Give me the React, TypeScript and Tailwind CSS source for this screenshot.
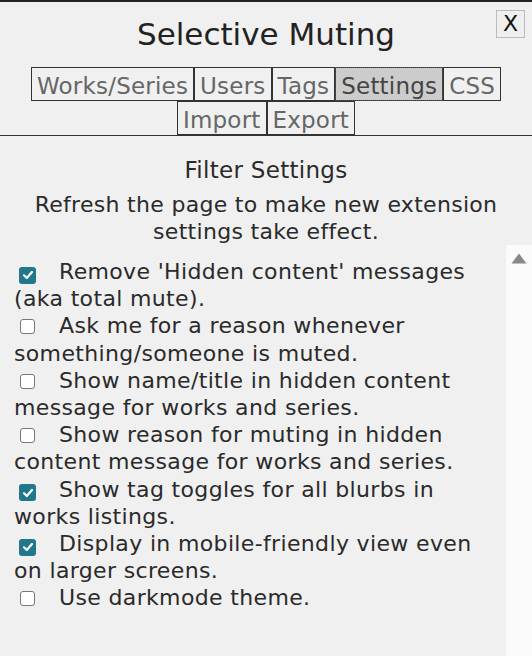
const tabsTop = ["Works/Series", "Users", "Tags", "Settings", "CSS"];
const tabsBottom = ["Import", "Export"];

const options = [
  { label: "Remove 'Hidden content' messages (aka total mute).", checked: true },
  { label: "Ask me for a reason whenever something/someone is muted.", checked: false },
  { label: "Show name/title in hidden content message for works and series.", checked: false },
  { label: "Show reason for muting in hidden content message for works and series.", checked: false },
  { label: "Show tag toggles for all blurbs in works listings.", checked: true },
  { label: "Display in mobile-friendly view even on larger screens.", checked: true },
  { label: "Use darkmode theme.", checked: false },
];

const Tab = ({ label, active }: { label: string; active?: boolean }) => (
  <button
    className={
      active
        ? "h-[34px] px-[5px] pt-[4px] leading-[28px] text-[23px] tracking-[0.2px] text-[#444] bg-[#cccccc] border border-[#333] outline-1 outline-dotted outline-[#555] -outline-offset-1"
        : "h-[34px] px-[5px] pt-[4px] leading-[28px] text-[23px] tracking-[0.2px] text-[#666] bg-[#f0f0f0] border border-[#333]"
    }
  >
    {label}
  </button>
);

const Check = ({ checked }: { checked: boolean }) =>
  checked ? (
    <span className="inline-flex items-center justify-center w-[17px] h-[17px] ml-[5px] mr-[23px] rounded-[3px] bg-[#21788a] align-[-2px]">
      <svg width="12" height="12" viewBox="0 0 12 12">
        <path d="M2 6.3 L4.8 9 L10 3" fill="none" stroke="#fff" strokeWidth="2.2" strokeLinecap="round" strokeLinejoin="round" />
      </svg>
    </span>
  ) : (
    <span className="inline-block w-[15px] h-[15px] ml-[6px] mr-[24px] rounded-[3px] bg-white border border-[#777] align-[-1px]" />
  );

export default function App() {
  return (
    <div className="min-h-screen bg-[#f0f0f0] border-t-2 border-[#222] text-[#2a2a2a] font-['DejaVu_Sans',Verdana,sans-serif] overflow-hidden">
      {/* Header */}
      <div className="relative">
        <h1 className="pt-[12px] mb-[13px] text-center text-[31px] leading-[40px] font-normal text-[#222]">
          Selective Muting
        </h1>
        <button className="absolute right-[7px] top-[8px] w-[29px] h-[28px] border border-[#bbb] bg-[#efefef] text-[22px] leading-[26px] text-[#111]">
          X
        </button>
      </div>

      {/* Tabs */}
      <div className="border-b border-[#333]">
        <div className="flex justify-center">
          {tabsTop.map((t) => (
            <Tab key={t} label={t} active={t === "Settings"} />
          ))}
        </div>
        <div className="flex justify-center">
          {tabsBottom.map((t) => (
            <Tab key={t} label={t} />
          ))}
        </div>
      </div>

      {/* Settings */}
      <div className="pt-[21px] text-center text-[22px] leading-[27px] tracking-[0.3px]">
        <h2 className="font-normal text-[23px]">Filter Settings</h2>
        <p className="mt-[7px] px-[30px]">Refresh the page to make new extension settings take effect.</p>
      </div>

      <div className="flex h-[411px]">
        <ul className="flex-1 pl-[14px] pr-[6px] pt-[13px] text-[22px] leading-[27.2px] tracking-[0.35px]">
          {options.map((o) => (
            <li key={o.label}>
              <Check checked={o.checked} />
              {o.label}
            </li>
          ))}
        </ul>
        <div className="w-[26px] bg-[#fbfbfb] flex justify-center pt-[8px]">
          <svg width="16" height="11" viewBox="0 0 16 11">
            <path d="M8 0.5 L15.5 10.5 L0.5 10.5 Z" fill="#888" />
          </svg>
        </div>
      </div>
    </div>
  );
}
